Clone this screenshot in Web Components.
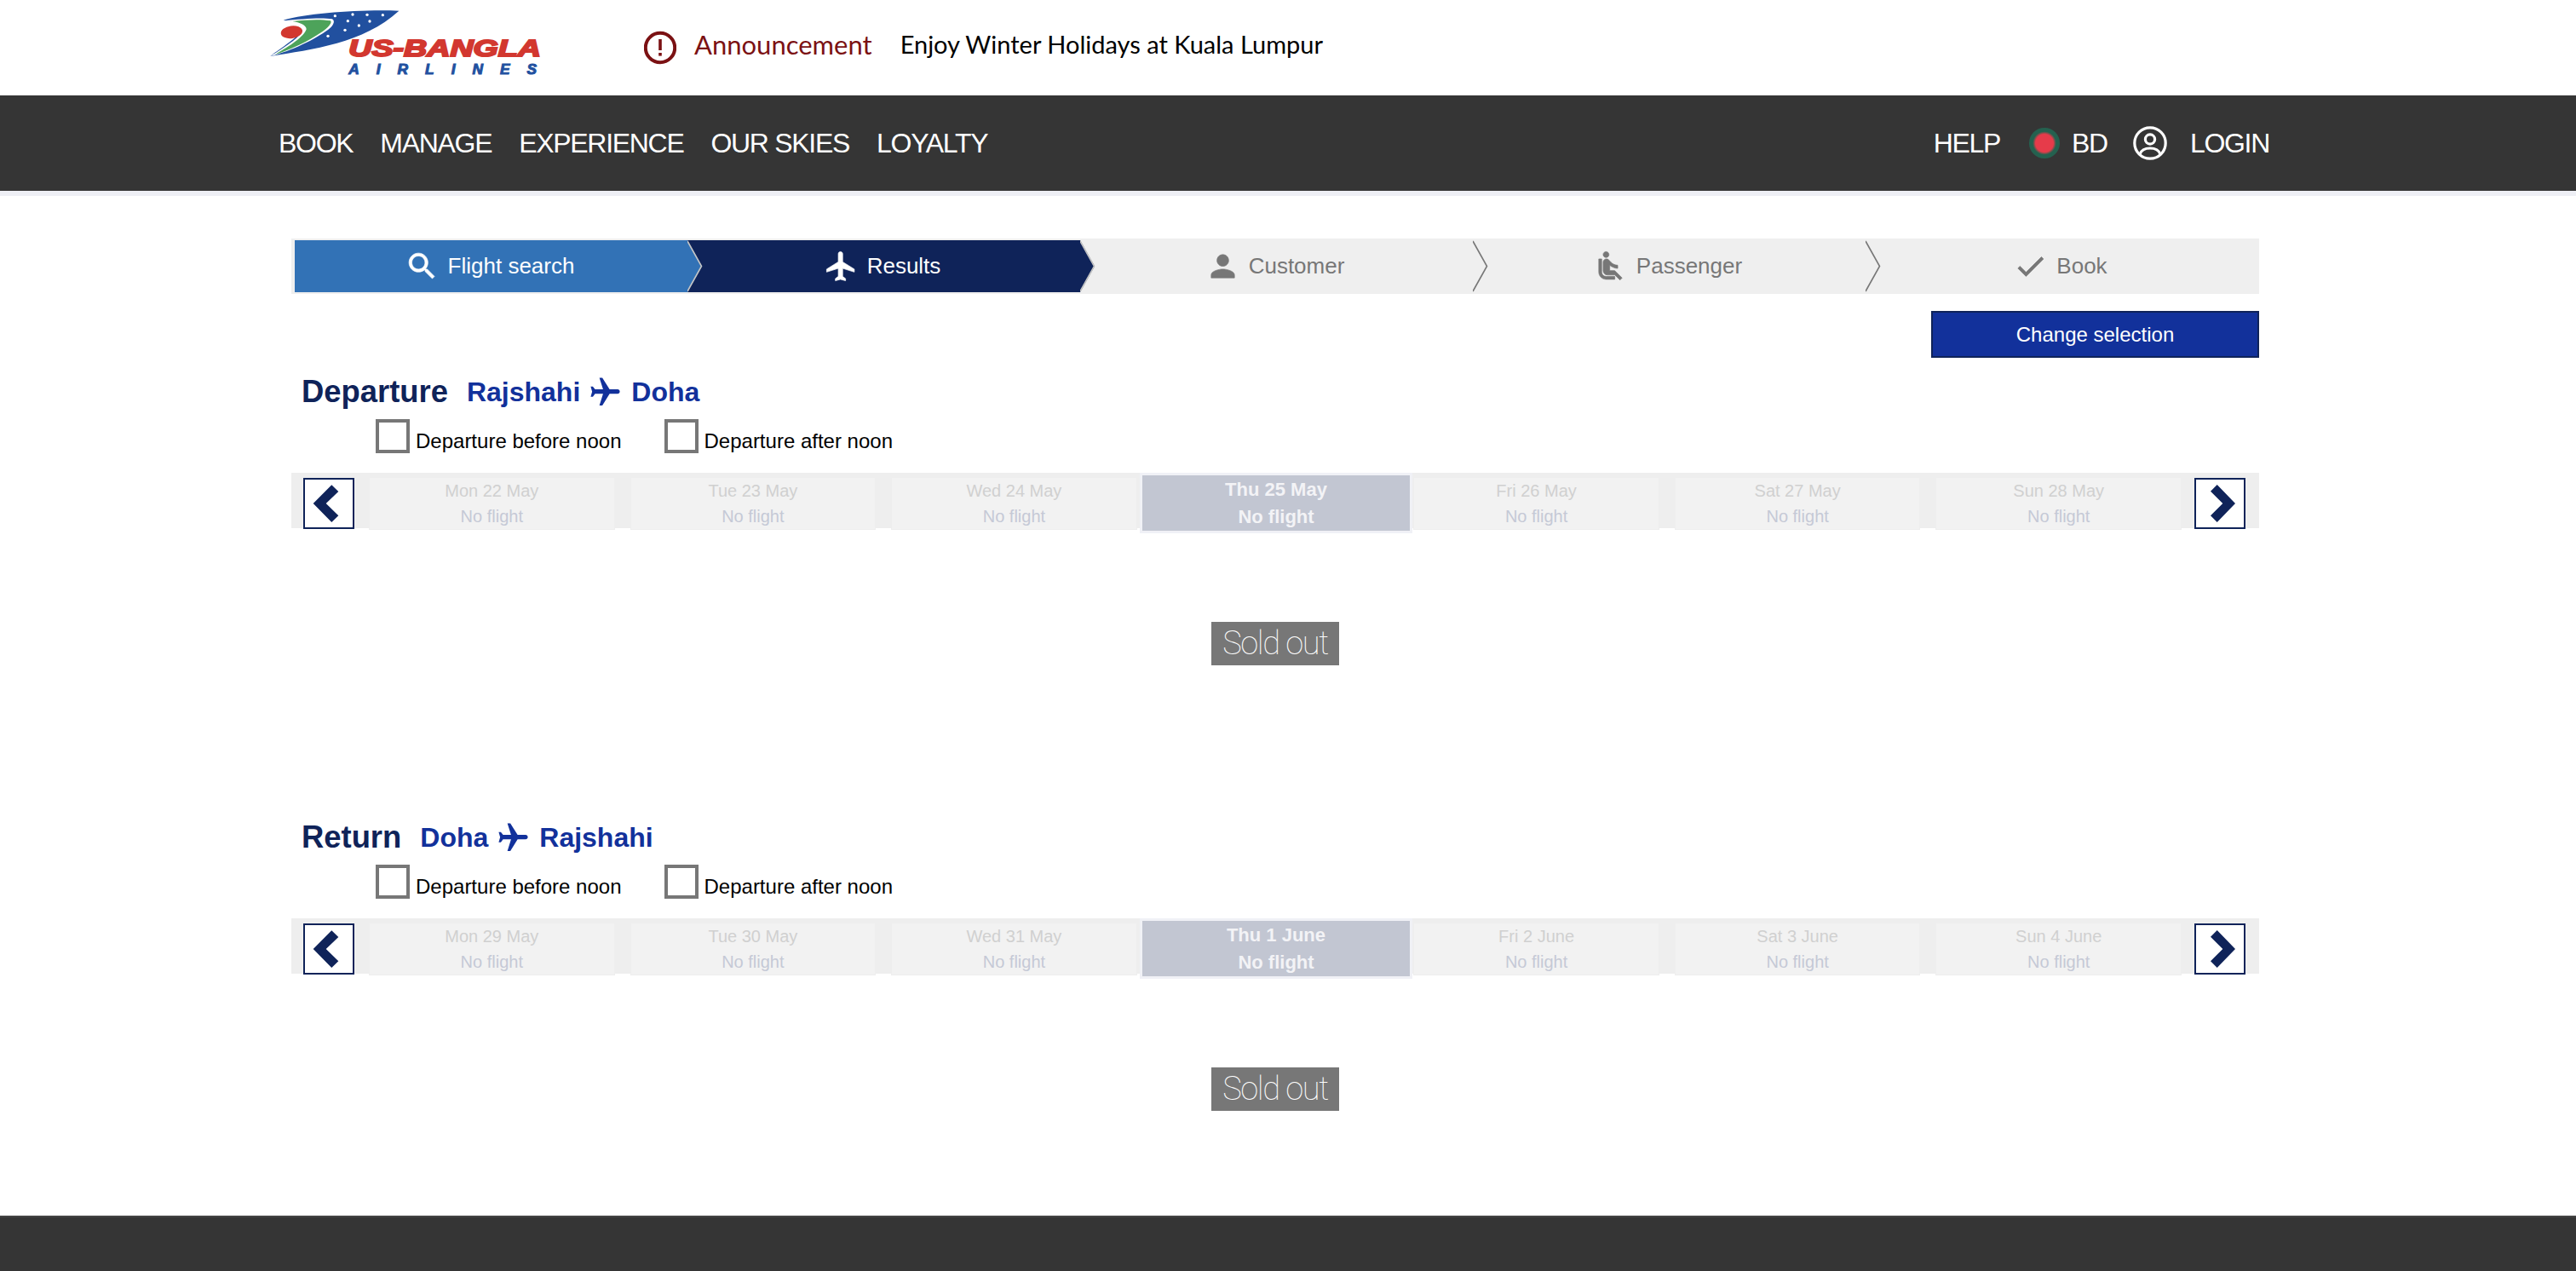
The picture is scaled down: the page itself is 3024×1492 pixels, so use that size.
<!DOCTYPE html>
<html lang="en">
<head>
<meta charset="UTF-8">
<title>US-Bangla Airlines</title>
<style>
    html, body { margin: 0; background: #fff; }
    body { font-family: "Liberation Sans", Arial, sans-serif; }
</style>
</head>
<body>
<usb-header>
    <usb-announcement label="Announcement">Enjoy Winter Holidays at Kuala Lumpur</usb-announcement>
</usb-header>
<usb-nav></usb-nav>
<usb-content>
    <usb-steps>
        <usb-step icon="search" state="done" arrow>Flight search</usb-step>
        <usb-step icon="flight" state="active" arrow>Results</usb-step>
        <usb-step icon="person" arrow>Customer</usb-step>
        <usb-step icon="seat" arrow>Passenger</usb-step>
        <usb-step icon="check">Book</usb-step>
    </usb-steps>
    <usb-action>Change selection</usb-action>
    <flight-section heading="Departure" from="Rajshahi" to="Doha"
        days="Mon 22 May|Tue 23 May|Wed 24 May|Thu 25 May|Fri 26 May|Sat 27 May|Sun 28 May"></flight-section>
    <flight-section heading="Return" from="Doha" to="Rajshahi"
        days="Mon 29 May|Tue 30 May|Wed 31 May|Thu 1 June|Fri 2 June|Sat 3 June|Sun 4 June"></flight-section>
</usb-content>
<usb-footer></usb-footer>

<script type="text/javascript">
    const ICONS = {
        search: '<path d="M15.5 14h-.79l-.28-.27C15.41 12.59 16 11.11 16 9.5 16 5.91 13.09 3 9.5 3S3 5.91 3 9.5 5.91 16 9.5 16c1.61 0 3.09-.59 4.23-1.57l.27.28v.79l5 4.99L20.49 19l-4.99-5zm-6 0C7.01 14 5 11.99 5 9.5S7.01 5 9.5 5 14 7.01 14 9.5 11.99 14 9.5 14z"/>',
        flight: '<path d="M21 16v-2l-8-5V3.5c0-.83-.67-1.5-1.5-1.5S10 2.67 10 3.5V9l-8 5v2l8-2.5V19l-2 1.5V22l3.5-1 3.5 1v-1.5L13 19v-5.5l8 2.5z"/>',
        person: '<path d="M12 12c2.21 0 4-1.79 4-4s-1.79-4-4-4-4 1.79-4 4 1.79 4 4 4zm0 2c-2.67 0-8 1.34-8 4v2h16v-2c0-2.66-5.33-4-8-4z"/>',
        seat: '<path d="M7.59 5.41c-.78-.78-.78-2.05 0-2.83.78-.78 2.05-.78 2.83 0 .78.78.78 2.05 0 2.83-.79.79-2.05.79-2.83 0zM6 16V7H4v9c0 2.76 2.24 5 5 5h6v-2H9c-1.66 0-3-1.34-3-3zm14 4.07L14.93 15H11.5v-3.68c1.4 1.15 3.6 2.16 5.5 2.16v-2.16c-1.66.02-3.61-.87-4.67-2.04l-1.4-1.55c-.19-.21-.43-.38-.69-.5-.29-.14-.62-.23-.96-.23h-.03C8.01 7 7 8.01 7 9.25V15c0 1.66 1.34 3 3 3h5.07l3.5 3.5L20 20.07z"/>',
        check: '<path d="M9 16.17L4.83 12l-1.41 1.41L9 19 21 7l-1.41-1.41z"/>'
    };

    // small helper so each class only has to hand over its markup
    class ShadowElement extends HTMLElement {
        render(html) {
            this.attachShadow({mode: "open"}).innerHTML = html;
        }
    }

    customElements.define("usb-logo", class extends ShadowElement {
        constructor() {
            super();
            this.render(`
            <style>
                :host { display: block; width: 350px; height: 110px; }
                svg { display: block; }
                text { font-family: "Liberation Sans", Arial, sans-serif; font-weight: 700; font-style: italic; }
            </style>
            <svg width="350" height="110" viewBox="0 0 1050 330">
                <path fill="#21509f" d="M475 35C340 30 160 42 68 68C120 75 140 85 135 100C120 130 60 165 22 195C170 170 350 150 475 35Z"/>
                <path fill="#fff" d="M70 70C130 64 200 58 240 64C254 72 240 92 225 102C180 135 100 175 22 195C70 165 125 130 135 105C135 90 110 75 70 70Z"/>
                <path fill="#4da35a" d="M100 72C150 66 200 64 234 70C242 78 222 98 200 112C160 140 90 175 40 188C90 160 142 125 149 100C149 85 125 76 100 72Z"/>
                <ellipse cx="97" cy="110" rx="38" ry="22" transform="rotate(-8 97 110)" fill="#d2372f"/>
                <g fill="#fff">
                    <circle cx="250" cy="53" r="5"/><circle cx="312" cy="48" r="5"/><circle cx="363" cy="49" r="5"/>
                    <circle cx="418" cy="50" r="5"/><circle cx="295" cy="71" r="5"/><circle cx="372" cy="72" r="5"/>
                    <circle cx="334" cy="87" r="5"/><circle cx="285" cy="103" r="5"/><circle cx="225" cy="124" r="5"/>
                </g>
                <text x="298" y="194" font-size="84" fill="#d2372f" stroke="#d2372f" stroke-width="6" textLength="677" lengthAdjust="spacingAndGlyphs">US-BANGLA</text>
                <text x="298" y="259" font-size="52" fill="#21509f" stroke="#21509f" stroke-width="3" textLength="662" lengthAdjust="spacing">AIRLINES</text>
            </svg>`);
        }
    });

    customElements.define("usb-announcement", class extends ShadowElement {
        constructor() {
            super();
            this.render(`
            <style>
                :host { display: flex; align-items: center; font-family: Lato, sans-serif; font-size: 29px; color: #000; }
                svg { display: block; margin-right: 21px; }
                span { margin-bottom: 9px; }
                .label { color: #7b1113; font-size: 31px; margin-right: 33px; }
            </style>
            <svg width="38" height="40" viewBox="0 0 38 40" fill="none">
                <circle cx="19" cy="20" r="17.2" stroke="#7b1113" stroke-width="4"/>
                <rect x="17.2" y="10" width="3.6" height="13" fill="#7b1113"/>
                <rect x="17.2" y="26" width="3.6" height="3.6" fill="#7b1113"/>
            </svg>
            <span class="label">${this.getAttribute("label")}</span>
            <span><slot></slot></span>`);
        }
    });

    customElements.define("usb-header", class extends ShadowElement {
        constructor() {
            super();
            this.render(`
            <style>
                :host { display: flex; align-items: center; height: 112px; padding-left: 310px; gap: 96px; }
            </style>
            <usb-logo></usb-logo>
            <slot></slot>`);
        }
    });

    customElements.define("usb-nav", class extends ShadowElement {
        constructor() {
            super();
            this.render(`
            <style>
                :host {
                    display: flex; align-items: center; justify-content: space-between;
                    height: 112px; padding: 0 360px 0 327px;
                    background: #353535; border-bottom: 6px solid #eeeff5;
                    color: #fff; font-size: 32px; line-height: 40px; letter-spacing: -1.3px;
                }
                nav, .right { display: flex; align-items: center; }
                nav { gap: 32px; }
                .flag {
                    width: 36px; height: 36px; border-radius: 50%; margin: 0 14px 0 34px;
                    background: radial-gradient(circle closest-side, #e63b4a 58%, #24614f 76%);
                }
                svg { display: block; margin: 0 27px 0 30px; }
            </style>
            <nav>
                <span>BOOK</span><span>MANAGE</span><span>EXPERIENCE</span><span>OUR SKIES</span><span>LOYALTY</span>
            </nav>
            <div class="right">
                <span>HELP</span>
                <div class="flag"></div>
                <span>BD</span>
                <svg width="40" height="40" viewBox="0 0 40 40" fill="none" stroke="#fff" stroke-width="3.2">
                    <circle cx="20" cy="20" r="18.2"/>
                    <circle cx="20" cy="15.5" r="5.6"/>
                    <path d="M8 33C10 27.5 15 26 20 26S30 27.5 32 33"/>
                </svg>
                <span>LOGIN</span>
            </div>`);
        }
    });

    customElements.define("usb-content", class extends ShadowElement {
        constructor() {
            super();
            this.render(`
            <style>
                :host { display: block; padding: 50px 372px 0 342px; }
            </style>
            <slot></slot>`);
        }
    });

    customElements.define("usb-steps", class extends ShadowElement {
        constructor() {
            super();
            this.render(`
            <style>
                :host {
                    display: grid; grid-template-columns: repeat(5, 1fr);
                    height: 61px; padding: 2px 1px 2px 4px; background: #efefef;
                }
                /* earlier steps stay on top so their arrow tip is not covered */
                ::slotted(usb-step:nth-child(1)) { z-index: 5; }
                ::slotted(usb-step:nth-child(2)) { z-index: 4; }
                ::slotted(usb-step:nth-child(3)) { z-index: 3; }
                ::slotted(usb-step:nth-child(4)) { z-index: 2; }
            </style>
            <slot></slot>`);
        }
    });

    customElements.define("usb-step", class extends ShadowElement {
        constructor() {
            super();
            const state = this.getAttribute("state");
            const fill = {done: "#3272b6", active: "#0f2359"}[state];
            // the arrow tip lies over the next step
            const arrow = !this.hasAttribute("arrow") ? "" : `
                <svg class="tip" width="20" height="61" viewBox="0 0 20 61">
                    ${fill ? `<path d="M0 0L17 30.5L0 61Z" fill="${fill}"/>` : ""}
                    <path d="M0 1L16.5 30.5L0 60" fill="none" stroke="${fill ? "#c4c4c4" : "#777"}" stroke-width="1.6"/>
                </svg>`;
            this.render(`
            <style>
                :host {
                    display: flex; align-items: center; justify-content: center; position: relative;
                    padding-right: 4px; min-width: 0;
                    font-size: 26px; color: ${fill ? "#fff" : "#777"};
                    background: ${fill || "transparent"};
                }
                .icon { display: block; fill: currentColor; stroke: currentColor; stroke-width: .4; margin-right: 10px; }
                .tip { position: absolute; left: 100%; top: 0; }
            </style>
            <svg class="icon" width="41" height="41" viewBox="0 0 24 24">${ICONS[this.getAttribute("icon")]}</svg>
            <slot></slot>
            ${arrow}`);
        }
    });

    customElements.define("usb-action", class extends ShadowElement {
        constructor() {
            super();
            this.render(`
            <style>
                :host { display: flex; justify-content: flex-end; margin-top: 20px; }
                div {
                    box-sizing: border-box; width: 385px; height: 55px; line-height: 51px; text-align: center;
                    background: #12319b; border: 2px solid #0f2359; color: #fff; font-size: 24px;
                }
            </style>
            <div><slot></slot></div>`);
        }
    });

    customElements.define("usb-check", class extends ShadowElement {
        constructor() {
            super();
            this.render(`
            <style>
                :host { display: flex; align-items: flex-end; gap: 7px; font-size: 24px; line-height: 28px; color: #000; }
                i { display: block; box-sizing: border-box; width: 40px; height: 40px; border: 4px solid #777; background: #fff; }
            </style>
            <i></i><span><slot></slot></span>`);
        }
    });

    customElements.define("usb-arrow", class extends ShadowElement {
        constructor() {
            super();
            const points = this.getAttribute("dir") === "left"
                ? "11.7,30 33.3,8.3 41.3,16 26.7,30 41.3,44.3 33.3,52"
                : "48,30 26.7,8 19,15.7 33.3,30 19,44.3 26.7,52";
            this.render(`
            <style>
                :host {
                    display: block; box-sizing: border-box; width: 60px; height: 60px;
                    background: #fff; border: 2px solid #0f2359;
                }
                svg { display: block; }
            </style>
            <svg width="56" height="56" viewBox="2 2 56 56"><polygon points="${points}" fill="#0f2359"/></svg>`);
        }
    });

    customElements.define("date-cell", class extends ShadowElement {
        constructor() {
            super();
            this.render(`
            <style>
                :host {
                    display: block; box-sizing: border-box; height: 62px; margin: 0 9px; padding-top: 0;
                    background: #f2f2f2; border: 1px solid #eee; text-align: center;
                    font-size: 20px; line-height: 30px; color: #c5c9d6;
                }
                .day { color: #d0d0d0; }
                :host([selected]) {
                    height: 71px; margin: 0 -8px 0 -6px; padding-top: 1px; z-index: 1;
                    background: #c2c6d2; border: 3px solid #f0f1f6;
                    font-size: 22px; line-height: 32px; font-weight: 700; color: #f3f3f6;
                }
                :host([selected]) .day { color: #f3f3f6; }
            </style>
            <div class="day"><slot></slot></div>
            <div>No flight</div>`);
        }
    });

    customElements.define("flight-section", class extends ShadowElement {
        constructor() {
            super();
            const days = this.getAttribute("days").split("|");
            const cells = days.map((d, i) => `<date-cell${i === 3 ? " selected" : ""}>${d}</date-cell>`).join("");
            this.render(`
            <style>
                :host { display: block; padding-bottom: 123px; margin-top: 16px; }
                :host(:last-of-type) { margin-top: 55px; }
                .head {
                    display: flex; align-items: center; height: 40px; padding: 4px 0 0 12px;
                    font-weight: 700; font-size: 32px; color: #12319b;
                }
                h2 { margin: 0 22px 0 0; font-size: 36.4px; color: #0f2359; }
                .head svg { display: block; fill: #12319b; margin: 0 10px 0 9px; transform: rotate(90deg); }
                .checks { display: flex; gap: 50px; margin-top: 12px; padding-left: 99px; }
                .dates {
                    display: grid; grid-template-columns: 82px repeat(7, 1fr) 82px; align-items: center;
                    height: 65px; margin-top: 23px; background: #eee;
                }
                usb-arrow[dir=left] { margin-left: 14px; }
                usb-arrow[dir=right] { margin-left: 6px; }
                .result { display: flex; justify-content: center; margin-top: 110px; }
                .sold {
                    box-sizing: border-box; width: 150px; height: 51px; line-height: 51px; text-align: center;
                    background: #777; color: #fff; font-family: Roboto, sans-serif; font-weight: 100; font-size: 38px;
                    letter-spacing: -1.4px;
                }
            </style>
            <div class="head">
                <h2>${this.getAttribute("heading")}</h2>
                <span>${this.getAttribute("from")}</span>
                <svg width="41" height="41" viewBox="0 0 24 24">${ICONS.flight}</svg>
                <span>${this.getAttribute("to")}</span>
            </div>
            <div class="checks">
                <usb-check>Departure before noon</usb-check>
                <usb-check>Departure after noon</usb-check>
            </div>
            <div class="dates">
                <usb-arrow dir="left"></usb-arrow>
                ${cells}
                <usb-arrow dir="right"></usb-arrow>
            </div>
            <div class="result"><div class="sold">Sold out</div></div>`);
        }
    });

    customElements.define("usb-footer", class extends ShadowElement {
        constructor() {
            super();
            this.render(`
            <style>
                :host { display: block; box-sizing: border-box; height: 65px; background: #353535; border-top: 2px solid #444; }
            </style>`);
        }
    });
</script>
</body>
</html>
